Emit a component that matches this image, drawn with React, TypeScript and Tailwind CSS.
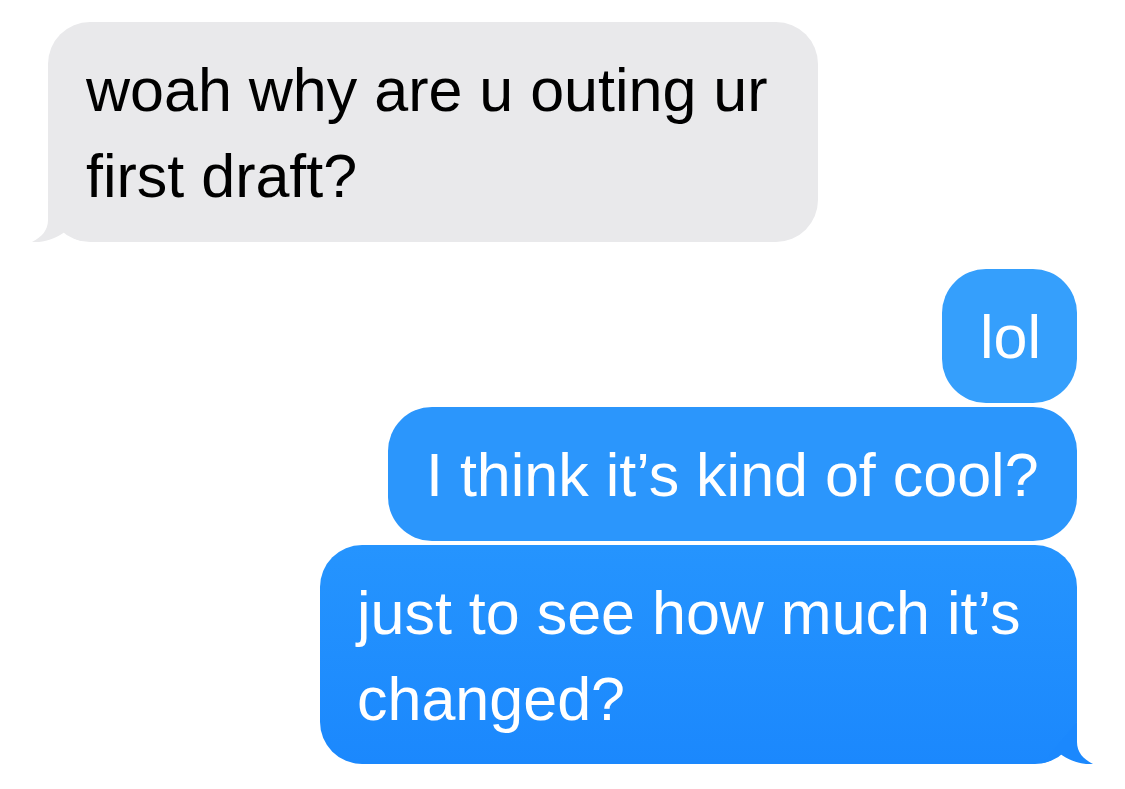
import React from 'react';

const GrayTail = () => (
  <svg className="absolute left-[-16px] bottom-0" width="50" height="42" viewBox="0 0 50 42">
    <path d="M16,0 L16,20 C16,30 10,37 0,42 C11,43 24,39 34,31 C38,36 43,40 50,41 L16,0 Z" fill="#e9e9eb" />
  </svg>
);

const BlueTail = () => (
  <svg className="absolute right-[-16px] bottom-0" width="50" height="42" viewBox="0 0 50 42">
    <path d="M34,0 L34,20 C34,30 40,37 50,42 C39,43 26,39 16,31 C12,36 7,40 0,41 L34,0 Z" fill="#1b88fd" />
  </svg>
);

const App: React.FC = () => {
  return (
    <div className="w-[1125px] h-[789px] bg-white px-[48px] pt-[22px] font-['Liberation_Sans',Arial,sans-serif] text-[61px] leading-[86px] overflow-hidden">
      {/* received */}
      <div className="relative w-[770px] rounded-[42px] bg-[#e9e9eb] pl-[38px] pr-[40px] pt-[25px] pb-[23px] text-black">
        woah why are u outing ur first draft?
        <GrayTail />
      </div>

      {/* sent */}
      <div className="mt-[27px] flex flex-col items-end gap-[3px]">
        <div className="w-[135px] rounded-[44px] bg-[#359ffc] pl-[38px] pt-[25px] pb-[23px] text-white">
          lol
        </div>
        <div className="mt-px w-[689px] rounded-[44px] bg-[#2b96fc] pl-[38px] pt-[25px] pb-[23px] text-white">
          I think it’s kind of cool?
        </div>
        <div className="relative mt-px w-[757px] rounded-[42px] bg-linear-to-b from-[#2594fe] to-[#1b88fd] pl-[37px] pr-[40px] pt-[25px] pb-[22px] text-white">
          just to see how much it’s changed?
          <BlueTail />
        </div>
      </div>
    </div>
  );
};

export default App;
